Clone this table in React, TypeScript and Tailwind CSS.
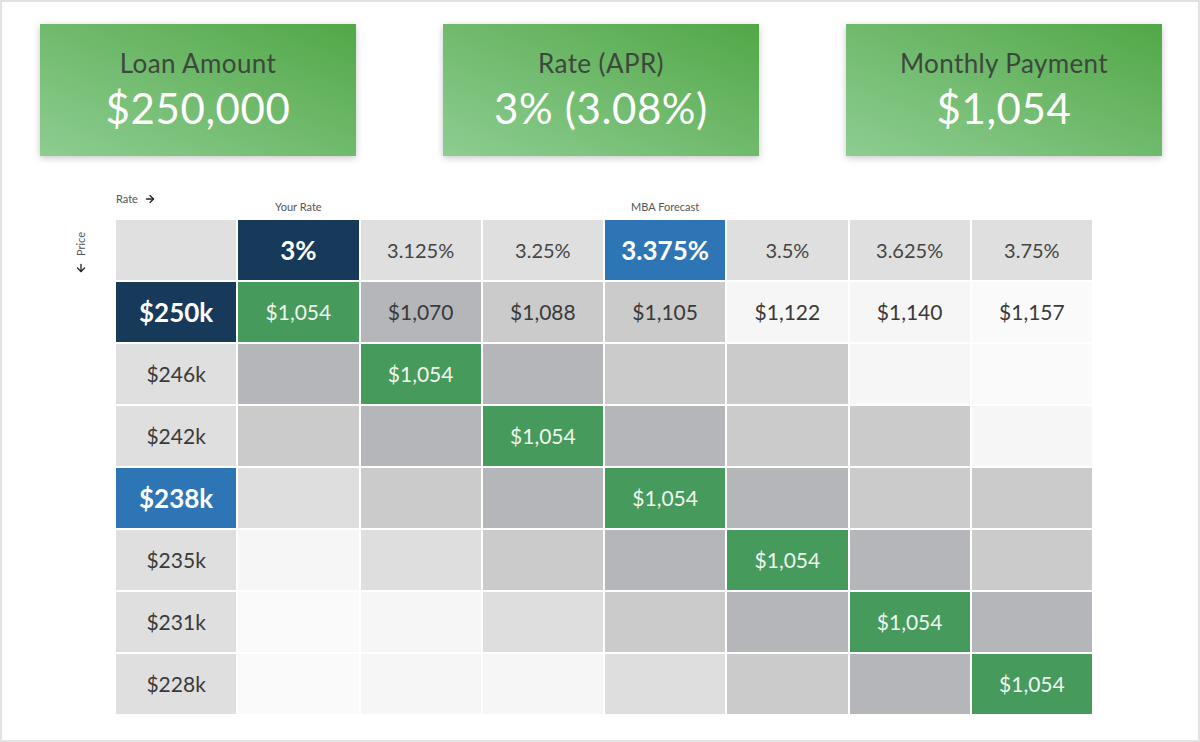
import React from "react";
import { ArrowRight, ArrowDown } from "lucide-react";

const rates = ["3%", "3.125%", "3.25%", "3.375%", "3.5%", "3.625%", "3.75%"];
const prices = ["$250k", "$246k", "$242k", "$238k", "$235k", "$231k", "$228k"];
const firstRow = ["$1,054", "$1,070", "$1,088", "$1,105", "$1,122", "$1,140", "$1,157"];

// shade codes: g = match, d = dark, m = mid, l = light, x = faint, y = fainter
const shades = [
  ["g", "d", "m", "m", "x", "x", "y"],
  ["d", "g", "d", "m", "m", "x", "y"],
  ["m", "d", "g", "d", "m", "m", "x"],
  ["l", "m", "d", "g", "d", "m", "m"],
  ["x", "l", "m", "d", "g", "d", "m"],
  ["y", "x", "l", "m", "d", "g", "d"],
  ["y", "x", "x", "l", "m", "d", "g"],
];

const shadeClass: Record<string, string> = {
  g: "bg-[#469a5c] text-[#eef6ef]",
  d: "bg-[#b5b6b9] text-[#3a3a3a]",
  m: "bg-[#cbcbcb] text-[#3a3a3a]",
  l: "bg-[#dedede] text-[#3a3a3a]",
  x: "bg-[#f6f6f6] text-[#3a3a3a]",
  y: "bg-[#fafafa] text-[#3a3a3a]",
};

function StatCard({ title, value }: { title: string; value: string }) {
  return (
    <div className="flex h-[132px] w-[316px] flex-col items-center bg-linear-to-tr from-[#8dcd91] to-[#52a746] pt-[24px] shadow-[0_2px_7px_rgba(0,0,0,0.22)]">
      <div className="text-[26px] leading-[30px] tracking-[0.4px] text-[#3d473d]">{title}</div>
      <div className="mt-[8px] text-[42px] leading-[44px] tracking-[0.6px] text-white">{value}</div>
    </div>
  );
}

export default function App() {
  return (
    <div
      className="h-[742px] w-[1200px] overflow-hidden border-2 border-[#e2e2e2] bg-white"
      style={{ fontFamily: "Lato, 'Open Sans', sans-serif" }}
    >
      <div className="flex justify-between pl-[38px] pr-[36px] pt-[22px]">
        <StatCard title="Loan Amount" value="$250,000" />
        <StatCard title="Rate (APR)" value="3% (3.08%)" />
        <StatCard title="Monthly Payment" value="$1,054" />
      </div>

      <div className="mt-[34px] flex">
        {/* price axis label */}
        <div className="flex w-[114px] flex-col items-start pl-[72px] pt-[42px]">
          <div className="flex w-[13px] flex-col items-center">
            <span className="rotate-180 text-[11px] leading-[13px] text-[#555] [writing-mode:vertical-rl]">
              Price
            </span>
            <ArrowDown size={12} strokeWidth={2.6} className="mt-[6px] text-[#222]" />
          </div>
        </div>

        <div className="w-[976px]">
          {/* top labels */}
          <div className="grid h-[30px] grid-cols-8 gap-[2px]">
            <div className="flex items-start gap-[6px] pt-[1px] text-[11px] leading-[16px] text-[#555]">
              Rate
              <ArrowRight size={12} strokeWidth={2.6} className="mt-[2px] text-[#222]" />
            </div>
            <div className="flex items-end justify-center pb-[6px] text-[11px] leading-[14px] text-[#555]">
              Your Rate
            </div>
            <div />
            <div />
            <div className="flex items-end justify-center pb-[6px] text-[11px] leading-[14px] text-[#555]">
              MBA Forecast
            </div>
          </div>

          <div className="grid grid-cols-8 auto-rows-[60px] gap-[2px]">
            <div className="bg-[#e0e0e0]" />
            {rates.map((r, i) => (
              <div
                key={r}
                className={
                  i === 0
                    ? "flex items-center justify-center bg-[#173a5b] text-[26px] font-bold text-white"
                    : i === 3
                      ? "flex items-center justify-center bg-[#2e75b5] text-[26px] font-bold text-white"
                      : "flex items-center justify-center bg-[#dfdfdf] text-[20px] text-[#444]"
                }
              >
                {r}
              </div>
            ))}

            {prices.map((p, ri) => (
              <React.Fragment key={p}>
                <div
                  className={
                    ri === 0
                      ? "flex items-center justify-center bg-[#173a5b] text-[26px] font-bold text-white"
                      : ri === 3
                        ? "flex items-center justify-center bg-[#2e75b5] text-[26px] font-bold text-white"
                        : "flex items-center justify-center bg-[#dfdfdf] text-[21px] text-[#3a3a3a]"
                  }
                >
                  {p}
                </div>
                {shades[ri].map((s, ci) => (
                  <div
                    key={ci}
                    className={`flex items-center justify-center text-[21px] ${shadeClass[s]}`}
                  >
                    {ri === 0 ? firstRow[ci] : s === "g" ? "$1,054" : ""}
                  </div>
                ))}
              </React.Fragment>
            ))}
          </div>
        </div>
      </div>
    </div>
  );
}
